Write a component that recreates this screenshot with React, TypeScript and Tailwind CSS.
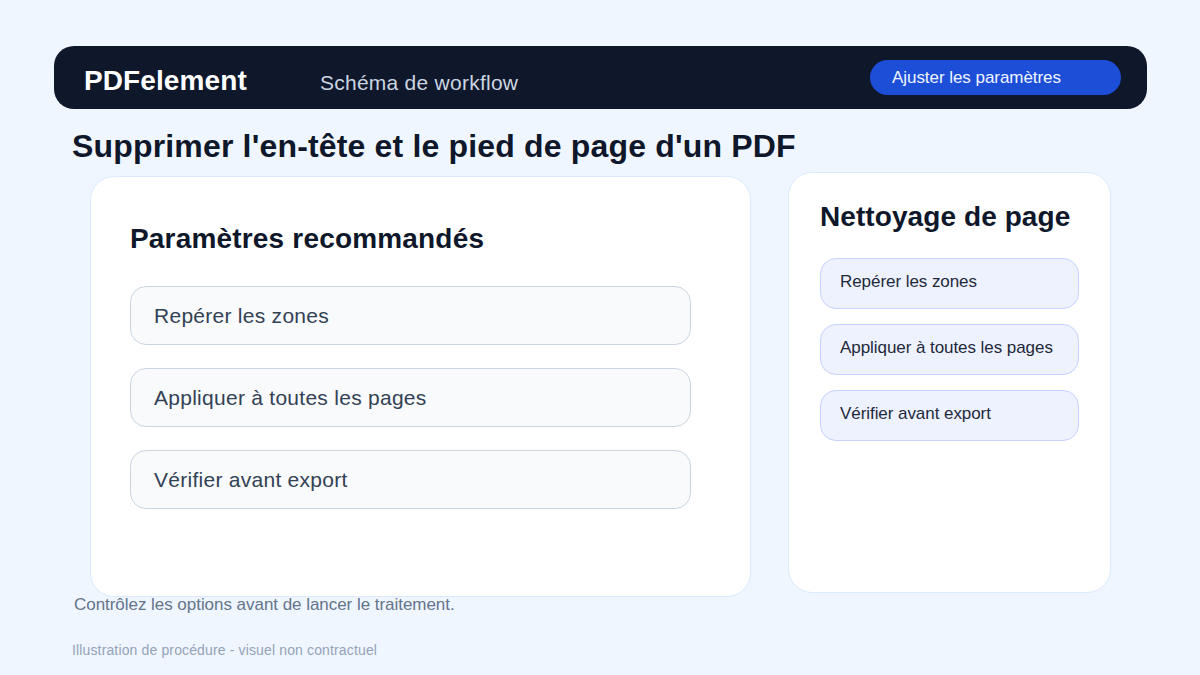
const steps = ["Repérer les zones", "Appliquer à toutes les pages", "Vérifier avant export"];

export default function App() {
  return (
    <div className="h-[675px] w-[1200px] overflow-hidden bg-[#eff6ff] pt-[46px] font-['Liberation_Sans',Arial,sans-serif]">
      <header className="ml-[54px] flex h-[63px] w-[1093px] items-start rounded-[20px] bg-[#0f172a]">
        <span className="ml-[30px] mt-[17px] w-[236px] text-[28px] font-bold leading-[36px] tracking-[0.1px] text-white">
          PDFelement
        </span>
        <span className="mt-[23px] w-[550px] text-[21px] leading-[28px] tracking-[0.25px] text-[#cbd5e1]">
          Schéma de workflow
        </span>
        <button className="mt-[14px] h-[35px] w-[251px] rounded-full bg-[#1d4ed8] pl-[22px] text-left text-[17px] tracking-[-0.05px] text-[#eff6ff]">
          Ajuster les paramètres
        </button>
      </header>

      <h1 className="ml-[72px] mt-[17px] text-[32px] font-bold leading-[40px] tracking-[0.17px] text-[#0f172a]">
        Supprimer l'en-tête et le pied de page d'un PDF
      </h1>

      <div className="ml-[90px] flex items-start gap-[37px]">
        <section className="mt-[10px] h-[421px] w-[661px] rounded-[24px] border border-[#dbeafe] bg-white px-[39px] pt-[44px]">
          <h2 className="text-[28px] font-bold leading-[36px] tracking-[0.18px] text-[#0f172a]">Paramètres recommandés</h2>
          <div className="mt-[29px] flex flex-col gap-[23px]">
            {steps.map((step) => (
              <div
                key={step}
                className="flex h-[59px] w-[561px] items-center rounded-[16px] border border-[#cbd5e1] bg-[#f8fafc] pl-[23px] text-[21px] tracking-[0.27px] text-[#334155]"
              >
                {step}
              </div>
            ))}
          </div>
        </section>

        <aside className="mt-[6px] h-[421px] w-[323px] rounded-[24px] border border-[#dbeafe] bg-white px-[31px] pt-[26px]">
          <h2 className="text-[28px] font-bold leading-[36px] tracking-[0.08px] text-[#0f172a]">Nettoyage de page</h2>
          <div className="mt-[23px] flex flex-col gap-[15px]">
            {steps.map((step) => (
              <div
                key={step}
                className="h-[51px] w-[259px] rounded-[16px] border border-[#c7d2fe] bg-[#eef2ff] pl-[19px] pt-[12px] text-[17px] leading-[22px] tracking-[-0.06px] text-[#1e293b]"
              >
                {step}
              </div>
            ))}
          </div>
        </aside>
      </div>

      <p className="-mt-[3px] ml-[74px] text-[17px] leading-[22px] tracking-[-0.04px] text-[#64748b]">
        Contrôlez les options avant de lancer le traitement.
      </p>
      <p className="ml-[72px] mt-[25px] text-[14px] leading-[18px] tracking-[0.14px] text-[#94a3b8]">
        Illustration de procédure - visuel non contractuel
      </p>
    </div>
  );
}
